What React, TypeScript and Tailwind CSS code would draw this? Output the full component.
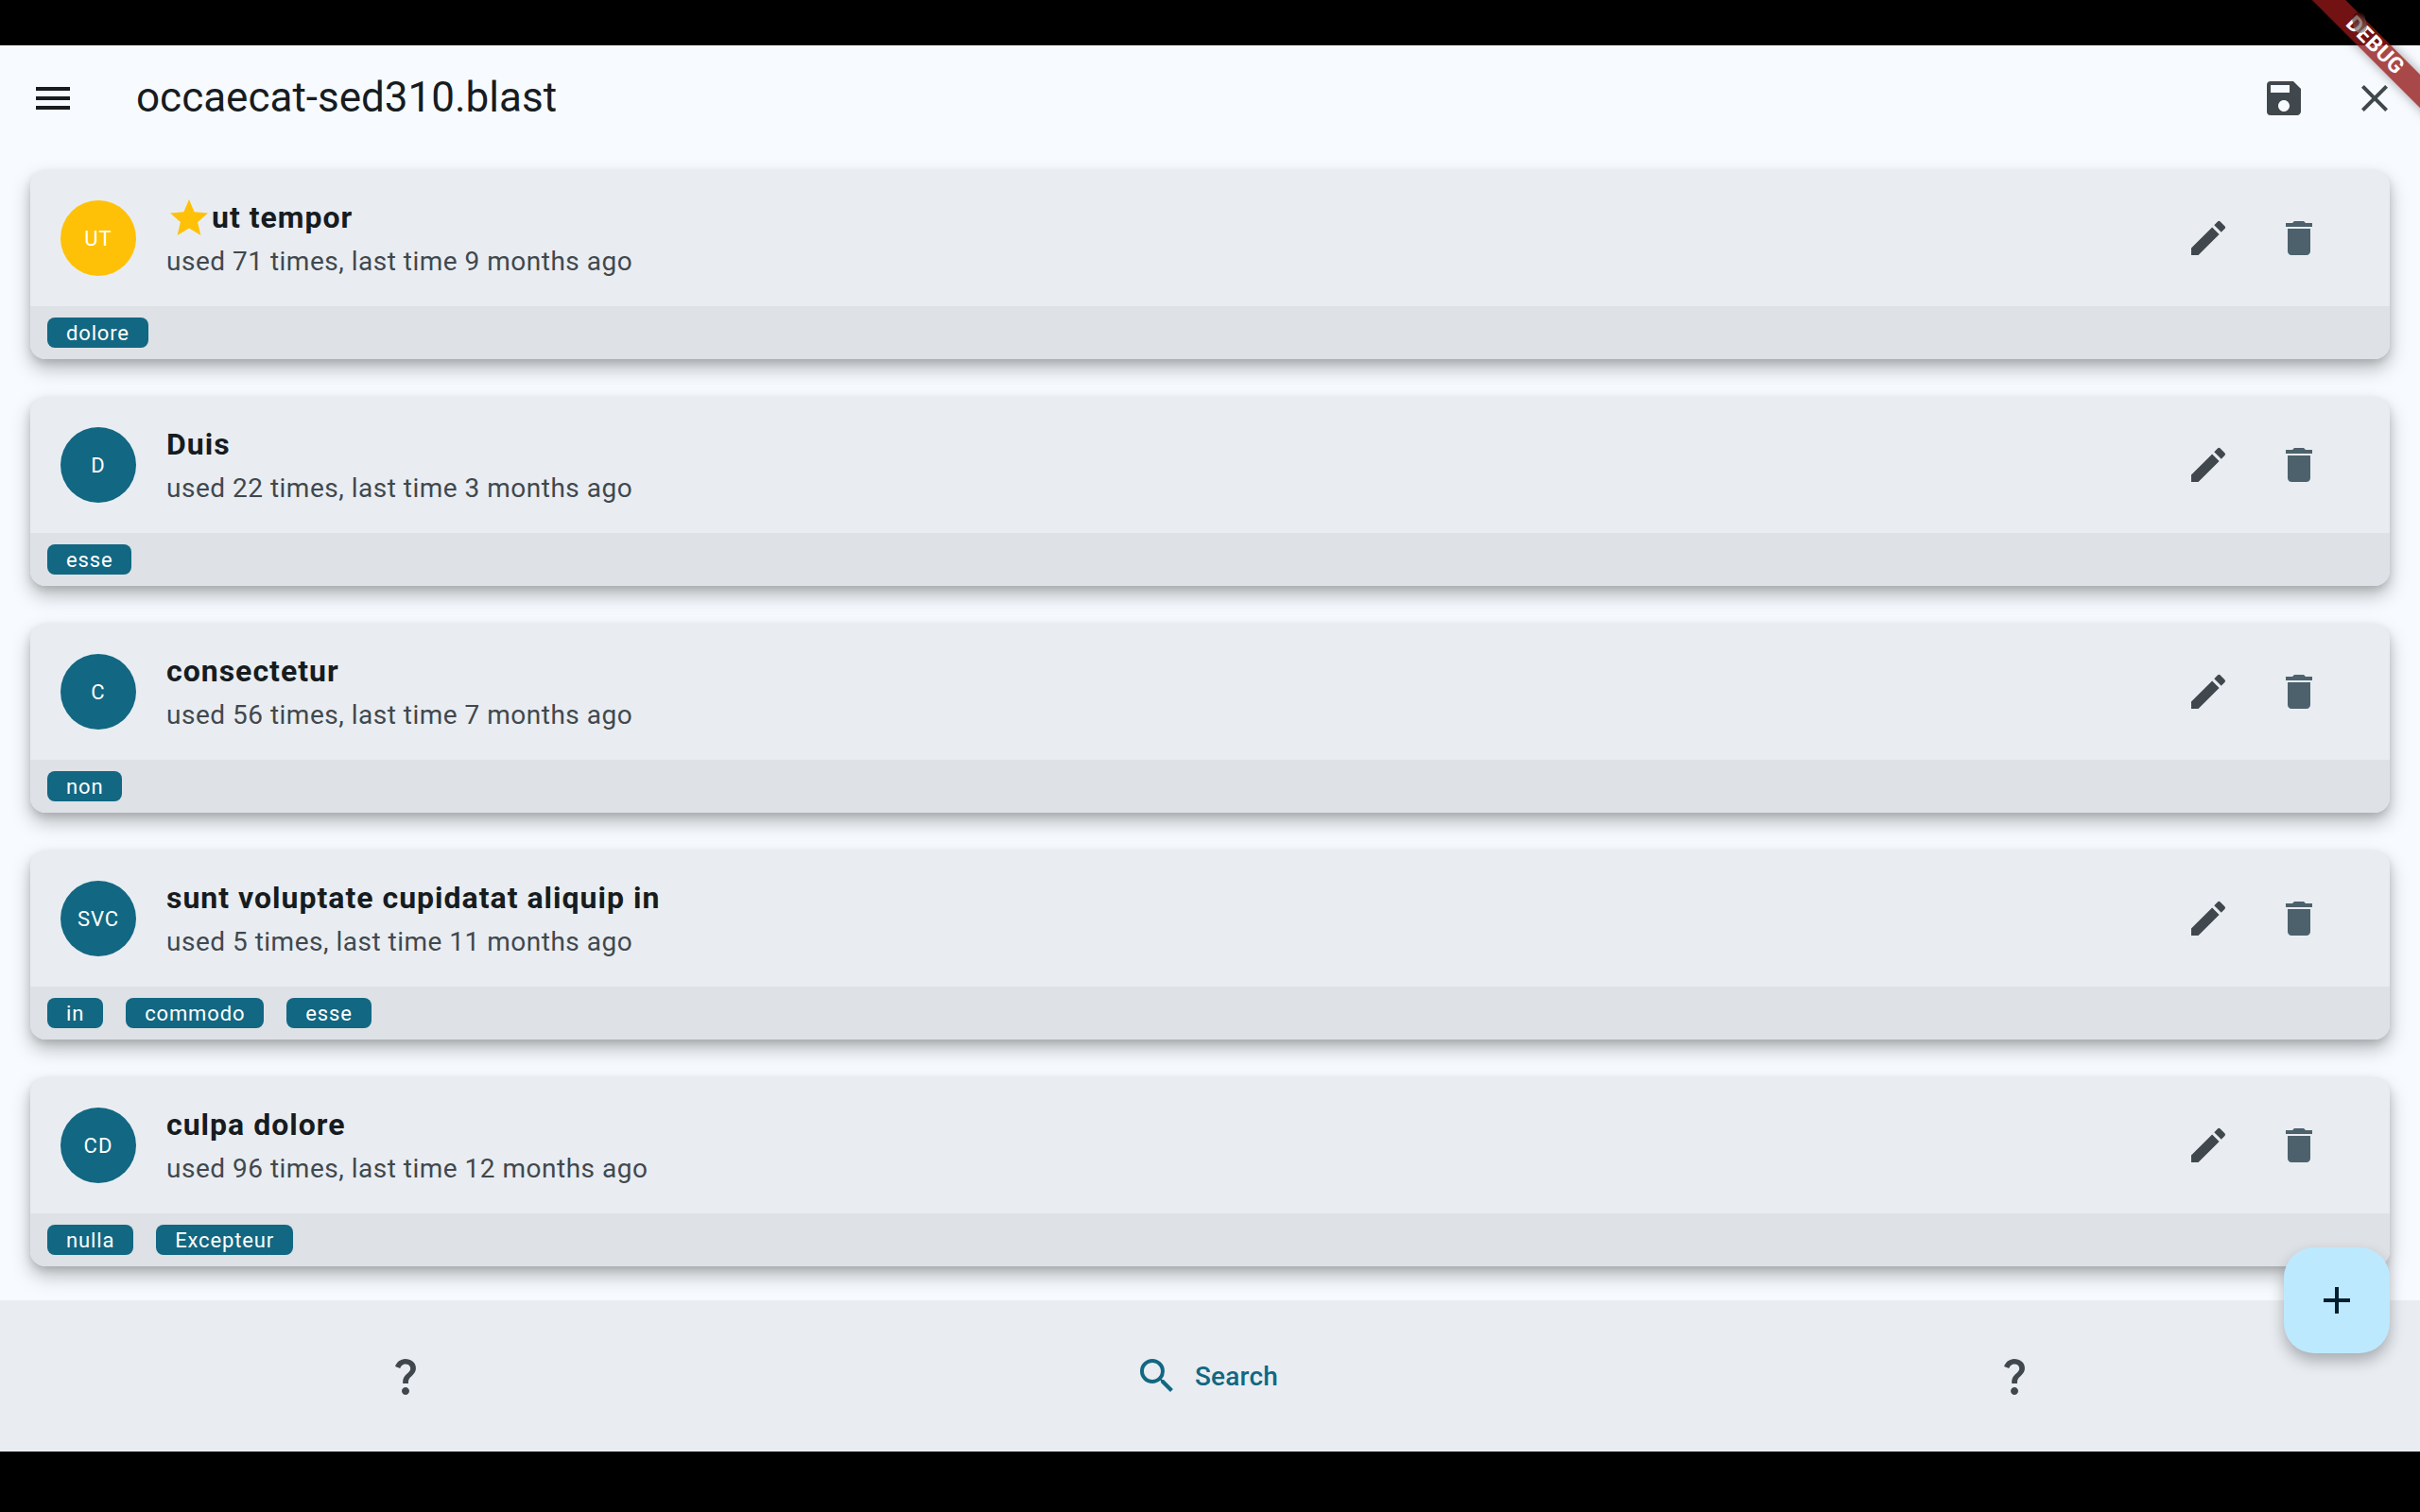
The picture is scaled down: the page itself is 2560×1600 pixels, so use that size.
import { MdMenu, MdSave, MdClose, MdEdit, MdDelete, MdSearch, MdAdd, MdQuestionMark, MdStar } from "react-icons/md";

const items = [
  { initials: "UT", title: "ut tempor", star: true, sub: "used 71 times, last time 9 months ago", tags: ["dolore"] },
  { initials: "D", title: "Duis", sub: "used 22 times, last time 3 months ago", tags: ["esse"] },
  { initials: "C", title: "consectetur", sub: "used 56 times, last time 7 months ago", tags: ["non"] },
  { initials: "SVC", title: "sunt voluptate cupidatat aliquip in", sub: "used 5 times, last time 11 months ago", tags: ["in", "commodo", "esse"] },
  { initials: "CD", title: "culpa dolore", sub: "used 96 times, last time 12 months ago", tags: ["nulla", "Excepteur"] },
];

function Card({ item }: { item: (typeof items)[number] }) {
  return (
    <div className="h-[200px] rounded-[16px] bg-[#e9edf2] shadow-[0_10px_20px_rgba(0,0,0,0.26),0_4px_8px_rgba(0,0,0,0.12)] flex flex-col overflow-hidden">
      <div className="h-[144px] flex items-center pl-[32px] pr-[72px]">
        <div className={`w-[80px] h-[80px] rounded-full flex items-center justify-center text-white text-[22px] tracking-[1px] ${item.star ? "bg-[#ffc107]" : "bg-[#126782]"}`}>
          {item.initials}
        </div>
        <div className="ml-[32px] pt-[3px] flex-1 flex flex-col">
          <div className="h-[46px] pb-[3px] flex items-center text-[32px] font-bold tracking-[1px] text-[#171c1f]">
            {item.star && <MdStar size={48} className="text-[#ffc107] translate-y-[1px]" />}
            <span>{item.title}</span>
          </div>
          <div className="h-[44px] flex items-center text-[28px] tracking-[0.5px] text-[#41484d]">{item.sub}</div>
        </div>
        <MdEdit size={48} className="text-[#41484d]" />
        <MdDelete size={48} className="ml-[48px] text-[#4d616c]" />
      </div>
      <div className="h-[56px] bg-[#dee1e6] flex items-start pt-[12px] pl-[18px] gap-[24px]">
        {item.tags.map((t) => (
          <div key={t} className="h-[32px] rounded-[8px] bg-[#126782] px-[20px] flex items-center text-[22px] tracking-[0.85px] text-white">
            {t}
          </div>
        ))}
      </div>
    </div>
  );
}

export default function App() {
  return (
    <div className="relative w-[2560px] h-[1600px] overflow-hidden bg-black flex flex-col font-['Roboto',sans-serif]">
      <div className="h-[48px] shrink-0 bg-black" />
      <div className="flex-1 bg-[#f7fbff] flex flex-col">
        <div className="h-[132px] flex pt-[32px] items-start">
          <MdMenu size={48} className="ml-[32px] text-[#171c1f]" />
          <div className="ml-[64px] h-[46px] flex items-center text-[44px] text-[#171c1f]">occaecat-sed310.blast</div>
          <div className="flex-1" />
          <MdSave size={48} className="text-[#41484d]" />
          <MdClose size={48} className="ml-[48px] mr-[24px] text-[#41484d]" />
        </div>
        <div className="flex-1 flex flex-col gap-[40px] px-[32px]">
          {items.map((it) => (
            <Card key={it.initials} item={it} />
          ))}
        </div>
        <div className="h-[160px] bg-[#e9edf2] grid grid-cols-3 px-[3px] items-center justify-items-center">
          <MdQuestionMark size={48} className="text-[#41484d]" />
          <div className="flex items-center gap-[16px] pr-[8px] text-[28px] font-medium tracking-[0.2px] text-[#126782]">
            <MdSearch size={48} />
            <span className="pt-[2px]">Search</span>
          </div>
          <MdQuestionMark size={48} className="text-[#41484d]" />
        </div>
      </div>
      <div className="h-[64px] shrink-0 bg-black" />

      <div className="absolute left-[2416px] top-[1320px] w-[112px] h-[112px] rounded-[32px] bg-[#bde9ff] shadow-[0_8px_16px_rgba(0,0,0,0.28)] flex items-center justify-center text-[#001e2c]">
        <MdAdd size={48} />
      </div>

      <div className="absolute left-[2392px] top-[36px] w-[240px] h-[25px] rotate-45 origin-center bg-[#921717]/[0.785] shadow-[0_0_12px_rgba(0,0,0,0.35)] flex items-center justify-center text-white text-[23px] font-bold tracking-[0.5px]">
        DEBUG
      </div>
      <div className="absolute left-[2489px] top-[13px] w-[14px] h-[22px] -rotate-12 rounded-full bg-linear-to-b from-[#300000]/60 to-[#888888]/70" />
    </div>
  );
}
